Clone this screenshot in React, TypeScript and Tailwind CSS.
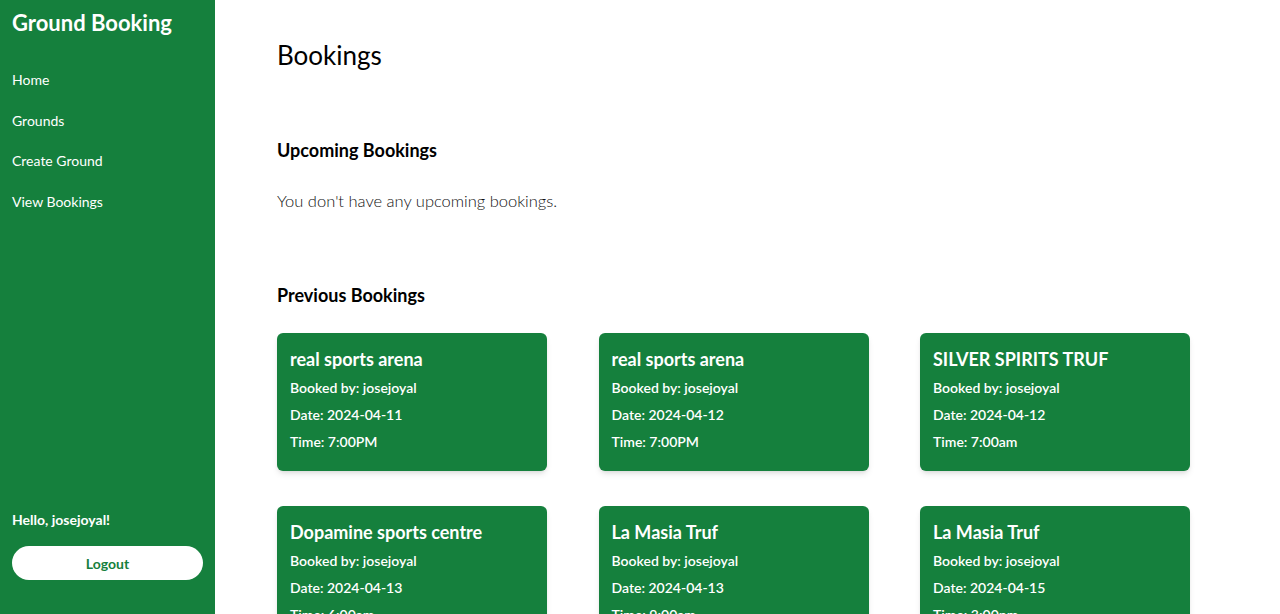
import React from 'react';

interface Booking {
    ground: string;
    user: string;
    date: string;
    time: string;
}

const previous: Booking[] = [
    { ground: 'real sports arena', user: 'josejoyal', date: '2024-04-11', time: '7:00PM' },
    { ground: 'real sports arena', user: 'josejoyal', date: '2024-04-12', time: '7:00PM' },
    { ground: 'SILVER SPIRITS TRUF', user: 'josejoyal', date: '2024-04-12', time: '7:00am' },
    { ground: 'Dopamine sports centre', user: 'josejoyal', date: '2024-04-13', time: '6:00am' },
    { ground: 'La Masia Truf', user: 'josejoyal', date: '2024-04-13', time: '9:00am' },
    { ground: 'La Masia Truf', user: 'josejoyal', date: '2024-04-15', time: '3:00pm' },
];

const navLinks = ['Home', 'Grounds', 'Create Ground', 'View Bookings'];

const App: React.FC = () => {
    return (
        <div className="flex h-[614px] overflow-hidden bg-white font-['Lato','Noto_Sans',sans-serif] text-black">
            {/* SIDEBAR */}
            <aside className="w-[215px] shrink-0 bg-[#15803d] text-white flex flex-col px-3">
                <h1 className="text-[22px] font-bold mt-[8px] leading-[30px]">Ground Booking</h1>
                <nav className="flex flex-col mt-[22px]">
                    {navLinks.map((link) => (
                        <a key={link} href="#" className="text-[14px] leading-[20px] py-[10px] mb-[0.5px]">
                            {link}
                        </a>
                    ))}
                </nav>
                <div className="mt-auto mb-[34px]">
                    <p className="text-[14px] font-bold">Hello, josejoyal!</p>
                    <button className="mt-[16px] w-full h-[34px] rounded-full bg-white text-[#15803d] text-[14px] font-bold">
                        Logout
                    </button>
                </div>
            </aside>

            {/* MAIN */}
            <main className="flex-1 pl-[62px] pt-[38px]">
                <h2 className="text-[26px] leading-[34px]">Bookings</h2>

                <section className="mt-[66px]">
                    <h3 className="text-[18px] font-bold leading-[24px]">Upcoming Bookings</h3>
                    <p className="mt-[27px] text-[16.5px] font-light text-[#111] leading-[24px]">
                        You don't have any upcoming bookings.
                    </p>
                </section>

                <section className="mt-[70px]">
                    <h3 className="text-[18px] font-bold leading-[24px]">Previous Bookings</h3>
                    <div className="mt-[26px] grid grid-cols-[repeat(3,270px)] gap-x-[51.5px] gap-y-[35px]">
                        {previous.map((b, i) => (
                            <div key={i} className="h-[138px] bg-[#15803d] text-white rounded-md shadow-md px-[13px] pt-[14px]">
                                <h4 className="text-[18px] font-bold leading-[24px]">{b.ground}</h4>
                                <p className="text-[14px] font-semibold leading-[27px] mt-[3px]">Booked by: {b.user}</p>
                                <p className="text-[14px] font-semibold leading-[27px]">Date: {b.date}</p>
                                <p className="text-[14px] font-semibold leading-[27px]">Time: {b.time}</p>
                            </div>
                        ))}
                    </div>
                </section>
            </main>
        </div>
    );
};

export default App;
